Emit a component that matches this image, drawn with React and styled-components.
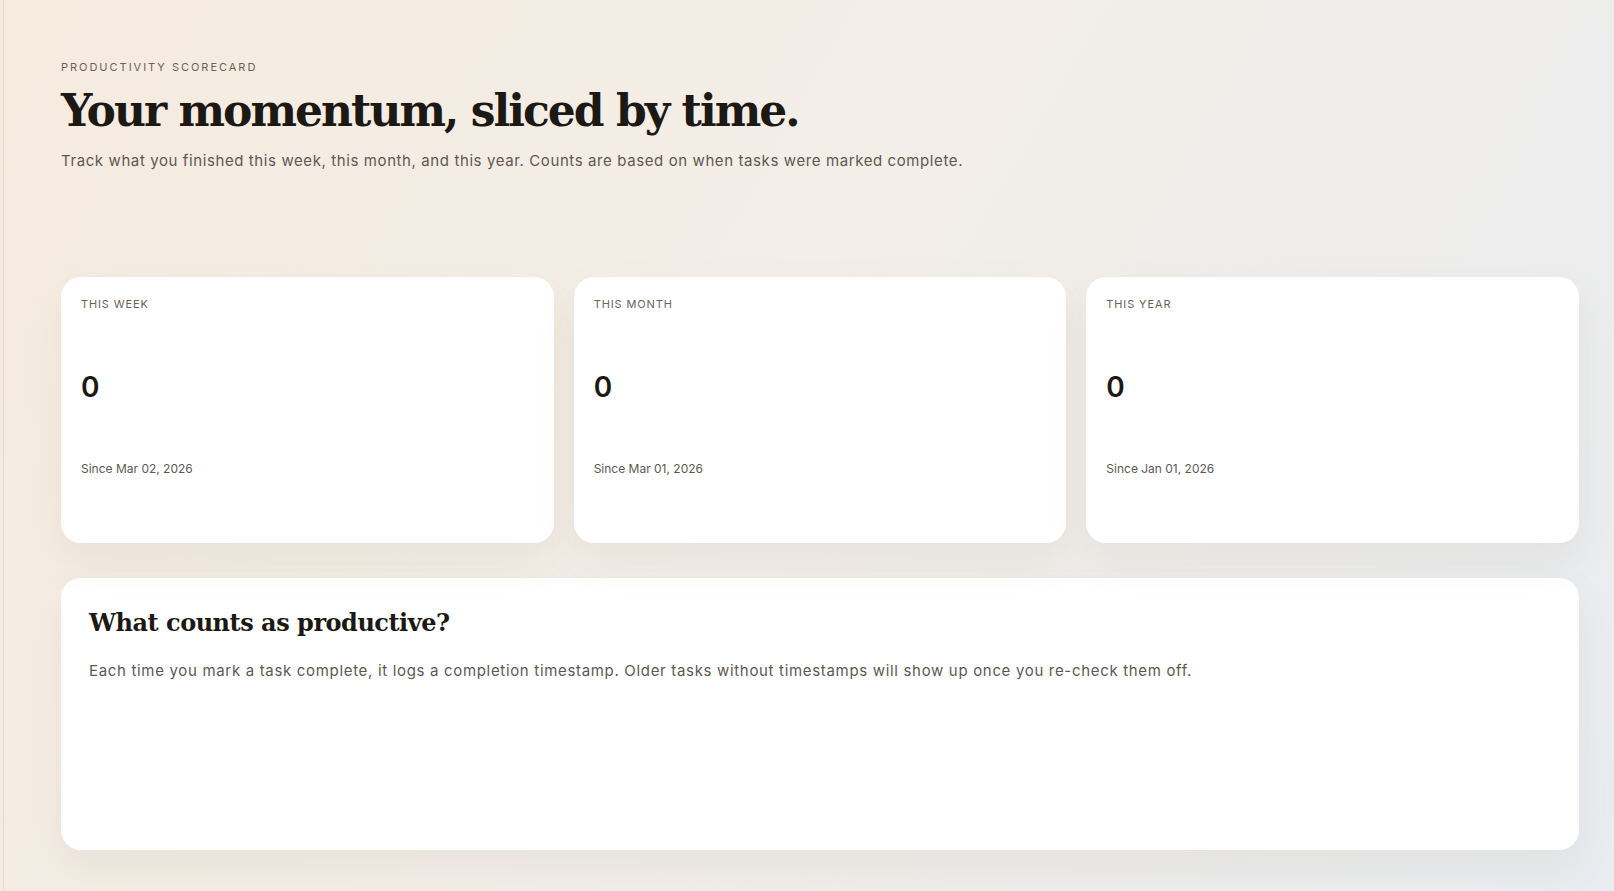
import React from 'react';
import styled, { createGlobalStyle } from 'styled-components';

const GlobalStyle = createGlobalStyle`
	* {
		box-sizing: border-box;
	}
	html, body {
		margin: 0;
		padding: 0;
	}
	body {
		font-family: Inter, 'Liberation Sans', sans-serif;
		color: #1c1915;
		background: linear-gradient(120deg, #f6ebdf 0%, #f3eee8 45%, #e9ecf0 100%);
		min-height: 100vh;
	}
`;

const periods = [
	{ label: 'This week', count: 0, since: 'Since Mar 02, 2026' },
	{ label: 'This month', count: 0, since: 'Since Mar 01, 2026' },
	{ label: 'This year', count: 0, since: 'Since Jan 01, 2026' },
];

function App() {
	return (
		<>
			<GlobalStyle />
			<Shell>
				<Main>
					{/* header */}
					<Header>
						<Eyebrow>Productivity scorecard</Eyebrow>
						<Title>Your momentum, sliced by time.</Title>
						<Lead>
							Track what you finished this week, this month, and this year. Counts are based on when tasks were marked complete.
						</Lead>
					</Header>

					{/* stats */}
					<StatGrid>
						{periods.map((p) => (
							<StatCard key={p.label}>
								<StatLabel>{p.label}</StatLabel>
								<StatValue>{p.count}</StatValue>
								<StatSince>{p.since}</StatSince>
							</StatCard>
						))}
					</StatGrid>

					{/* explainer */}
					<InfoCard>
						<InfoTitle>What counts as productive?</InfoTitle>
						<InfoText>
							Each time you mark a task complete, it logs a completion timestamp. Older tasks without timestamps will show up once you re-check them off.
						</InfoText>
					</InfoCard>
				</Main>
			</Shell>
		</>
	);
}

export default App;

const Shell = styled.div`
	min-height: 100vh;
	padding-left: 3px;
`;

const Main = styled.main`
	min-height: 100vh;
	border-left: 1px solid #e6d9cb;
	padding: 58px 35px 42px 57px;
`;

const Header = styled.header`
	display: flex;
	flex-direction: column;
`;

const Eyebrow = styled.p`
	margin: 0;
	font-size: 11px;
	letter-spacing: 0.18em;
	text-transform: uppercase;
	color: #6b6259;
	line-height: 18px;
`;

const Title = styled.h1`
	margin: 5px 0 0;
	font-family: 'DejaVu Serif', 'Liberation Serif', serif;
	font-weight: 700;
	font-size: 44px;
	line-height: 60px;
	letter-spacing: -0.045em;
	color: #1c1915;
`;

const Lead = styled.p`
	margin: 9px 0 0;
	font-size: 15px;
	line-height: 22px;
	letter-spacing: 0.04em;
	color: #5f5851;
`;

const StatGrid = styled.section`
	display: grid;
	grid-template-columns: repeat(3, 1fr);
	gap: 20px;
	margin-top: 105px;
`;

const StatCard = styled.article`
	background: #ffffff;
	border-radius: 20px;
	height: 266px;
	padding: 19px 20px;
	display: flex;
	flex-direction: column;
	box-shadow: 0 18px 40px rgba(120, 98, 70, 0.08);
`;

const StatLabel = styled.span`
	font-size: 11px;
	letter-spacing: 0.08em;
	text-transform: uppercase;
	color: #6b6259;
	line-height: 16px;
`;

const StatValue = styled.strong`
	margin-top: 57px;
	font-size: 28px;
	font-weight: 600;
	line-height: 36px;
	color: #1c1915;
`;

const StatSince = styled.span`
	margin-top: 56px;
	font-size: 12px;
	line-height: 16px;
	color: #5f5851;
`;

const InfoCard = styled.section`
	margin-top: 35px;
	background: #ffffff;
	border-radius: 20px;
	height: 272px;
	padding: 27px 28px;
	box-shadow: 0 18px 40px rgba(120, 98, 70, 0.08);
`;

const InfoTitle = styled.h2`
	margin: 0;
	font-family: 'DejaVu Serif', 'Liberation Serif', serif;
	font-weight: 700;
	font-size: 24px;
	line-height: 36px;
	letter-spacing: -0.02em;
	color: #1c1915;
`;

const InfoText = styled.p`
	margin: 18px 0 0;
	font-size: 15px;
	line-height: 24px;
	letter-spacing: 0.045em;
	color: #5f5851;
`;
